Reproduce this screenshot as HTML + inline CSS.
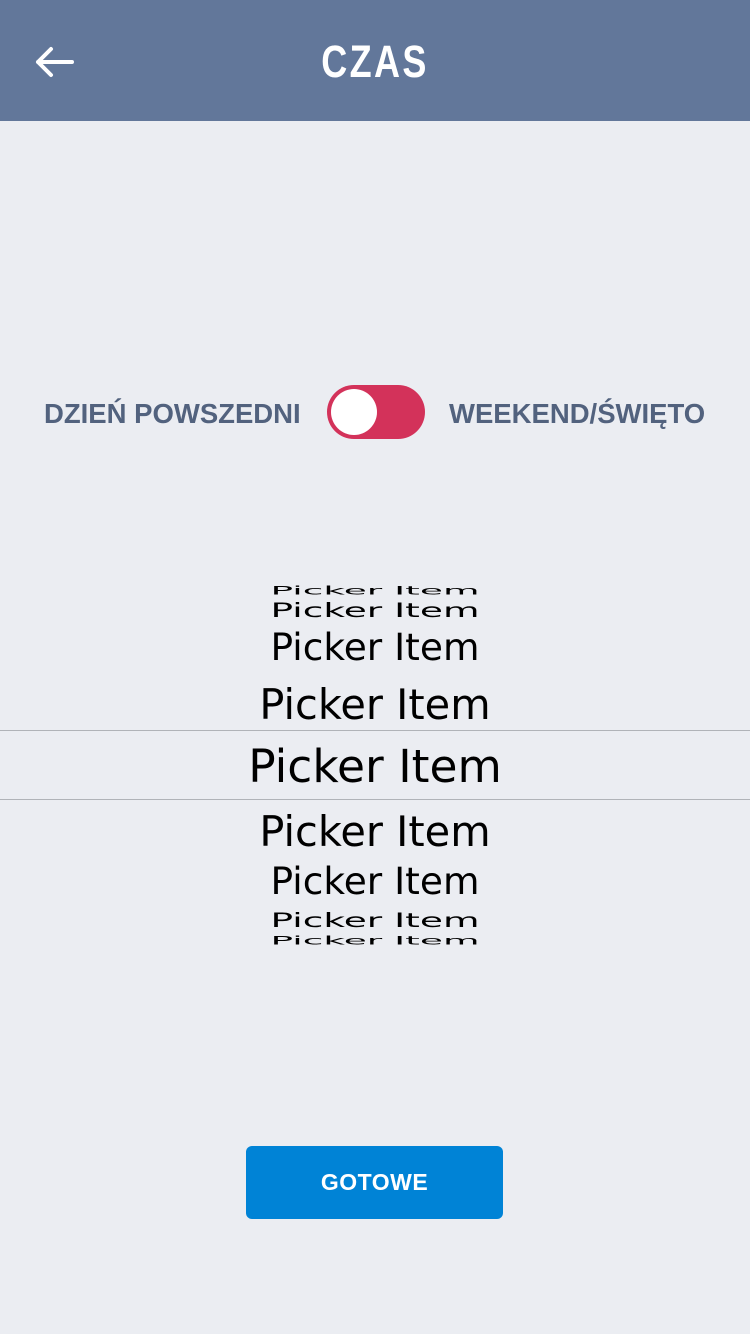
<!DOCTYPE html>
<html><head><meta charset="utf-8">
<style>
html,body{margin:0;padding:0}
body{width:750px;height:1334px;background:#ebedf2;position:relative;overflow:hidden;font-family:"Liberation Sans",sans-serif}
.hdr{position:absolute;left:0;top:0;width:750px;height:121px;background:#62779a}
.title{position:absolute;left:0;width:750px;top:34px;text-align:center;color:#fff;font-size:45px;font-weight:bold;line-height:56px;transform:scaleX(0.8);letter-spacing:3px}
.lbl{position:absolute;top:396px;color:#52627e;font-weight:bold;font-size:27.5px;line-height:36px;white-space:nowrap;transform-origin:left center}
.tog{position:absolute;left:327px;top:385px;width:98px;height:54px;border-radius:27px;background:#d3325a}
.knob{position:absolute;left:4px;top:4px;width:46px;height:46px;border-radius:50%;background:#fff}
.it{position:absolute;left:0;width:750px;text-align:center;font-family:"DejaVu Sans",sans-serif;color:#000;white-space:nowrap;line-height:1}
.ln{position:absolute;left:0;width:750px;height:1px;background:#b0b3b8}
.btn{position:absolute;left:246px;top:1146px;width:257px;height:73px;border-radius:6px;background:#0083d6;color:#fff;font-weight:bold;font-size:23px;line-height:73px;text-align:center;letter-spacing:0.5px}
</style></head><body>
<div class="hdr">
<svg style="position:absolute;left:34px;top:44px" width="40" height="36" viewBox="0 0 40 36"><path d="M4 18H38M4 18L17 5M4 18L17 31" stroke="#fff" stroke-width="4" fill="none" stroke-linecap="round" stroke-linejoin="round"/></svg>
<div class="title">CZAS</div>
</div>
<div class="lbl" style="left:44px">DZIEŃ POWSZEDNI</div>
<div class="tog"><div class="knob"></div></div>
<div class="lbl" style="left:449px">WEEKEND/ŚWIĘTO</div>

<div class="it" style="top:572px;font-size:37.5px;transform:scaleY(0.3)">Picker Item</div>
<div class="it" style="top:592px;font-size:37.5px;transform:scaleY(0.52)">Picker Item</div>
<div class="it" style="top:629px;font-size:37.5px">Picker Item</div>
<div class="it" style="top:684px;font-size:41.5px">Picker Item</div>
<div class="ln" style="top:730px"></div>
<div class="it" style="top:744px;font-size:45.5px">Picker Item</div>
<div class="ln" style="top:799px"></div>
<div class="it" style="top:811px;font-size:41.5px">Picker Item</div>
<div class="it" style="top:863px;font-size:37.5px">Picker Item</div>
<div class="it" style="top:902px;font-size:37.5px;transform:scaleY(0.52)">Picker Item</div>
<div class="it" style="top:922px;font-size:37.5px;transform:scaleY(0.3)">Picker Item</div>

<div class="btn">GOTOWE</div>
</body></html>
